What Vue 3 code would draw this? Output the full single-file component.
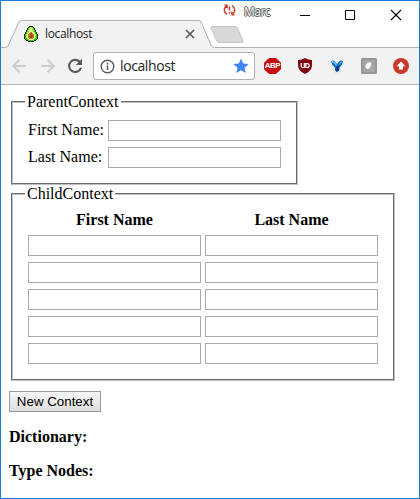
<script setup>
import { ref, reactive } from 'vue'

const person = reactive({ first: '', last: '' })
const children = ref(Array.from({ length: 5 }, () => ({ first: '', last: '' })))

const avocado = [
  '.....####.....',
  '....#gyyg#....',
  '...#gyllyg#...',
  '...#gyllyg#...',
  '..#gyllllyg#..',
  '..#gyllllyg#..',
  '.#gyllbbllyg#.',
  '.#gylbooblyg#.',
  '#gylbboobblyg#',
  '#gylbooddblyg#',
  '#gylbooddblyg#',
  '#gylbbddbblyg#',
  '#ggylbbbblygg#',
  '.#ggyllllygg#.',
  '..##gggggg##..',
  '....######....'
]
const tones = { '#': '#12350b', g: '#3fbf1c', y: '#a2ea35', l: '#eef58a', b: '#b9832c', o: '#a8651a', d: '#85480e' }
const pixels = avocado.flatMap((row, y) =>
  [...row].map((c, x) => ({ x, y, fill: tones[c] })).filter((p) => p.fill)
)
</script>

<template>
  <div class="window">
    <header class="titlebar">
      <div class="tab">
        <svg class="tab-shape" width="418" height="30" viewBox="0 0 418 30">
          <path d="M0 29V28.500H5Q6.500 28.500 7 27L18 3Q19 1.500 20.500 1.500H197Q199 1.500 200 3L210 26Q211.500 28.500 213.500 28.500H418V30H0Z" fill="#f2f2f2" />
          <path d="M0 28.500H5Q6.500 28.500 7 27L18 3Q19 1.500 20.500 1.500H197Q199 1.500 200 3L210 26Q211.500 28.500 213.500 28.500H418" fill="none" stroke="#b1b1b1" />
        </svg>
        <svg class="favicon" width="14" height="16" viewBox="0 0 14 16" shape-rendering="crispEdges">
          <rect v-for="p in pixels" :key="p.x + '-' + p.y" :x="p.x" :y="p.y" width="1" height="1" :fill="p.fill" />
        </svg>
        <span class="tab-title">localhost</span>
        <svg class="tab-close" width="10" height="10" viewBox="0 0 10 10">
          <path d="M1 1 9 9M9 1 1 9" stroke="#5b5b5b" stroke-width="1.700" />
        </svg>
      </div>
      <svg class="new-tab" width="36" height="19" viewBox="0 0 36 19">
        <path d="M3 1.500H26.500Q28 1.500 28.500 3L34 16Q34.500 17.500 33 17.500H10Q8.500 17.500 7.800 16L2 3Q1.500 1.500 3 1.500Z" fill="#d8d8d8" stroke="#c6c6c6" />
      </svg>
      <div class="profile">
        <svg width="13" height="12" viewBox="0 0 13 12" fill="none" stroke="#d23f31" stroke-width="1.500">
          <path d="M4.500 1.300H1.500M4.200 1.500V4.200M4 2Q1.300 3.200 1.300 6 1.300 8.500 3.800 10.300M8.500 10.700H11.500M8.800 10.500V7.800M9 10Q11.700 8.800 11.700 6 11.700 3.500 9.200 1.700M6.500 2.500V6.500M6.500 8V9.500" />
        </svg>
        <span>Marc</span>
      </div>
      <div class="controls">
        <svg width="12" height="12" viewBox="0 0 12 12"><path d="M1 6.500H11" stroke="#000" /></svg>
        <svg width="12" height="12" viewBox="0 0 12 12"><path d="M1.500 1.500H10.500V10.500H1.500Z" fill="none" stroke="#000" /></svg>
        <svg width="12" height="12" viewBox="0 0 12 12"><path d="M1 1 11 11M11 1 1 11" stroke="#000" stroke-width="1.100" /></svg>
      </div>
    </header>

    <nav class="toolbar">
      <svg class="back" width="16" height="16" viewBox="0 0 16 16" fill="none" stroke="#cdcdcd" stroke-width="2">
        <path d="M15 8H2.500M8.500 1.700 2.200 8 8.500 14.300" />
      </svg>
      <svg class="forward" width="16" height="16" viewBox="0 0 16 16" fill="none" stroke="#cdcdcd" stroke-width="2">
        <path d="M1 8H13.500M7.500 1.700 13.800 8 7.500 14.300" />
      </svg>
      <svg class="reload" width="16" height="16" viewBox="0 0 16 16">
        <path d="M13.300 4.600A6.100 6.100 0 1 0 14 9.700" fill="none" stroke="#5a5a5a" stroke-width="2.100" />
        <path d="M15 .8V7H8.800Z" fill="#5a5a5a" />
      </svg>
      <div class="address">
        <svg width="15" height="15" viewBox="0 0 15 15">
          <circle cx="7.500" cy="7.500" r="6.300" fill="none" stroke="#5a5a5a" stroke-width="1.400" />
          <path d="M7.500 6.500V11M7.500 3.800V5.400" stroke="#5a5a5a" stroke-width="1.600" />
        </svg>
        <span>localhost</span>
        <svg class="star" width="16" height="16" viewBox="0 0 16 16">
          <path d="M8 .5 10.200 5.600 15.700 6.100 11.500 9.700 12.800 15.100 8 12.200 3.200 15.100 4.500 9.700.3 6.100 5.800 5.600Z" fill="#4285f4" />
        </svg>
      </div>
      <div class="extensions">
        <div class="abp">ABP</div>
        <svg width="16" height="16" viewBox="0 0 16 16">
          <path d="M8 0Q11 2 15 2V7Q15 13 8 16 1 13 1 7V2Q5 2 8 0Z" fill="#800610" />
          <path d="M4.200 5V8.300Q4.200 9.500 5.700 9.500H7.300V5M8.800 5.600H10Q12.200 5.600 12.200 7.500T10 9.500H8.800Z" fill="none" stroke="#fff" stroke-width="1.200" />
        </svg>
        <svg width="16" height="16" viewBox="0 0 16 16">
          <path d="M1 2.500 3.500 1 8 4 12.500 1 15 2.500 14.500 6.500 11.500 10V13.500L8 15.500 5 13.500V10L1.500 6.500Z" fill="#fff" stroke="#dfe3e6" />
          <path d="M2 3.500Q4 1.500 6 3.800L8 6 10 3.800Q12 1.500 14 3.500 13.500 7 10.500 9.500V12.500L8 14.200 6 12.500V9.500Q2.500 7 2 3.500Z" fill="#1464b8" />
          <path d="M3.300 3.800Q5 3.500 7.300 7.300" fill="none" stroke="#58b8f4" stroke-width="1.700" stroke-linecap="round" />
          <path d="M12.800 4Q11.500 4 9.800 6.500" fill="none" stroke="#3992dc" stroke-width="1.300" stroke-linecap="round" />
          <path d="M8.500 8V13" stroke="#082f70" stroke-width="2" />
        </svg>
        <svg width="16" height="16" viewBox="0 0 16 16">
          <rect width="16" height="16" rx="1.500" fill="#969696" />
          <path d="M2 2H14V14H2Z" fill="#a6a6a6" />
          <path d="M9.800 4.200Q10.800 6 9.500 8.700 8 11.500 6 11 4 10.200 4.700 7.300 6 4 9.800 4.200Z" fill="#fff" />
        </svg>
        <svg width="16" height="16" viewBox="0 0 16 16">
          <circle cx="8" cy="8" r="8" fill="#c93a2b" />
          <path d="M8 3.500 12.300 8.300H10V11.500H6V8.300H3.700Z" fill="#fff" />
        </svg>
      </div>
    </nav>

    <main class="page">
      <fieldset class="parent">
        <legend>ParentContext</legend>
        <div class="parent-grid">
          <label for="first">First Name:</label>
          <input id="first" v-model="person.first" type="text">
          <label for="last">Last Name:</label>
          <input id="last" v-model="person.last" type="text">
        </div>
      </fieldset>

      <fieldset class="child">
        <legend>ChildContext</legend>
        <div class="child-grid">
          <b>First Name</b>
          <b>Last Name</b>
          <template v-for="(c, i) in children" :key="i">
            <input v-model="c.first" type="text">
            <input v-model="c.last" type="text">
          </template>
        </div>
      </fieldset>

      <button type="button">New Context</button>
      <p>Dictionary:</p>
      <p>Type Nodes:</p>
    </main>
  </div>
</template>

<style>
body {
  margin: 0;
  background: #fff;
}
</style>

<style scoped>
.window {
  box-sizing: border-box;
  width: 420px;
  height: 499px;
  border: 1px solid #1a7fd4;
  background: #fff;
  overflow: hidden;
}
svg {
  display: block;
  flex: none;
}
.titlebar {
  display: flex;
  height: 47px;
  align-items: flex-start;
}
.tab {
  position: relative;
  display: flex;
  box-sizing: border-box;
  width: 208px;
  height: 29px;
  margin-top: 18px;
  padding-left: 23px;
  align-items: center;
}
.tab-shape {
  position: absolute;
  left: 0;
  top: 0;
}
.favicon,
.tab-title,
.tab-close {
  position: relative;
}
.favicon {
  margin-top: 1px;
}
.tab-title {
  width: 133px;
  margin-left: 7px;
  font: 12px/16px "Open Sans", sans-serif;
  letter-spacing: -0.35px;
  color: #222;
}
.tab-close {
  margin-left: 7px;
}
.new-tab {
  margin-top: 24px;
  z-index: 1;
}
.profile {
  display: flex;
  gap: 8px;
  margin: 2px 0 0 -22px;
  font: 12px/15px "Open Sans", sans-serif;
  letter-spacing: -0.5px;
  color: #fff;
  text-shadow: 1px 0 #555, -1px 0 #555, 0 1px #555, 0 -1px #555;
}
.profile span {
  margin-top: 1px;
}
.profile svg {
  margin-top: 1px;
}
.controls {
  display: flex;
  gap: 33px;
  margin: 8px 17px 0 auto;
}
.controls svg:last-child {
  margin-left: 1px;
}
.toolbar {
  display: flex;
  box-sizing: border-box;
  height: 37px;
  padding-left: 10px;
  align-items: center;
  background: #f2f2f2;
  border-bottom: 1px solid #b6b4b6;
}
.forward {
  margin-left: 13px;
}
.reload {
  margin-left: 11px;
}
.address {
  display: flex;
  box-sizing: border-box;
  width: 162px;
  height: 28px;
  margin-left: 10px;
  padding: 0 5px 0 6px;
  align-items: center;
  border: 1px solid #b0b0b0;
  border-radius: 3px;
  background: #fff;
  font: 14px/20px "Open Sans", sans-serif;
  letter-spacing: -0.4px;
  color: #222;
}
.address span {
  margin-left: 5px;
}
.star {
  margin-left: auto;
}
.extensions {
  display: flex;
  gap: 16px;
  margin-left: 9px;
}
.abp {
  width: 17px;
  height: 16px;
  background: #c70d0d;
  clip-path: polygon(30% 0, 70% 0, 100% 30%, 100% 70%, 70% 100%, 30% 100%, 0 70%, 0 30%);
  font: bold 8px/16px "Liberation Sans", sans-serif;
  letter-spacing: -0.5px;
  text-align: center;
  color: #fff;
}
.page {
  padding: 8px;
  font: 16px/18px "Liberation Serif", serif;
  color: #000;
}
fieldset {
  box-sizing: border-box;
  margin: 0 2px;
  padding: 0 12px;
  border: 2px groove #c0c0c0;
}
legend {
  padding: 0 2px;
}
.parent {
  width: 287px;
  height: 92px;
}
.child {
  width: 384px;
  height: 196px;
}
.parent-grid {
  display: grid;
  grid-template-columns: 76px 173px;
  gap: 6px 4px;
  padding: 9px 0 0 3px;
}
.child-grid {
  display: grid;
  grid-template-columns: 173px 173px;
  gap: 6px 4px;
  padding: 8px 0 0 3px;
}
.parent-grid label {
  padding-top: 1px;
}
.child-grid b {
  text-align: center;
}
input {
  box-sizing: border-box;
  width: 173px;
  height: 21px;
  margin: 0;
  padding: 1px;
  border: 1px solid #a9a9a9;
  background: #fff;
}
button {
  display: block;
  box-sizing: border-box;
  width: 92px;
  height: 21px;
  margin-top: 10px;
  padding: 0;
  border: 1px solid #999;
  border-radius: 0;
  background: linear-gradient(#f6f6f6, #dedede);
  font: 13.333px/17px "Liberation Sans", sans-serif;
  color: #000;
}
p {
  margin: 16px 0;
  font-weight: bold;
}
</style>
